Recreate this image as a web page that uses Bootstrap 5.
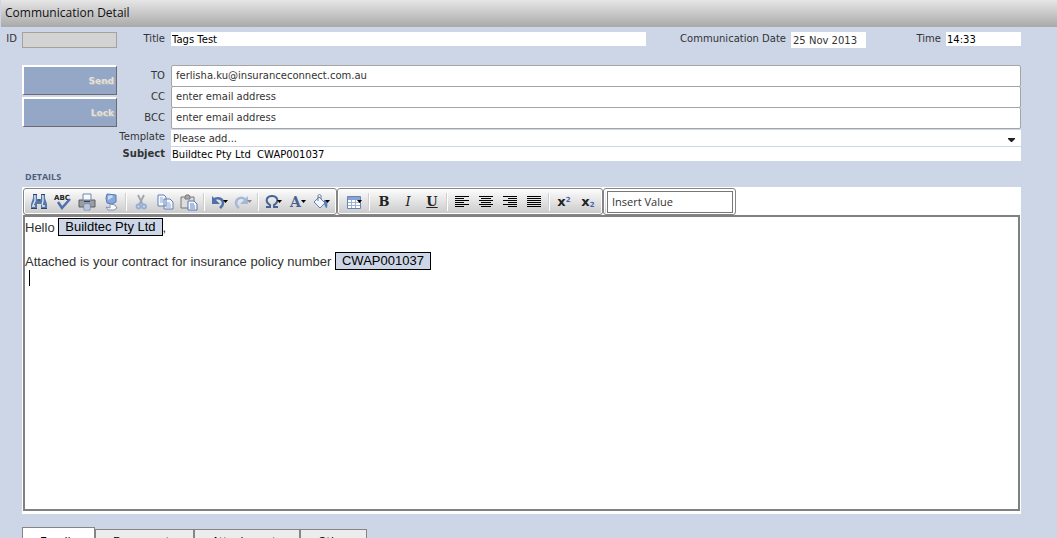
<!DOCTYPE html>
<html lang="en">
<head>
<meta charset="utf-8">
<meta name="viewport" content="width=device-width, initial-scale=1">
<title>Communication Detail</title>
<link href="https://cdn.jsdelivr.net/npm/bootstrap@5.3.0/dist/css/bootstrap.min.css" rel="stylesheet">
<style>
  body { background: #ccd6e7; color: #333; font: 11px/14px "DejaVu Sans", Verdana, sans-serif; }
  .shell { height: 100vh; padding-right: 36px; }
  .title-bar { height: 27px; margin: 0 -36px 0 1px; padding: 0 4px; background: linear-gradient(#e6e6e6, #a9a9a9); color: #111; font: 12px/26px "Open Sans", "Noto Sans", sans-serif; }
  .caption { text-align: right; white-space: nowrap; font-size: 10px; line-height: 14px; }
  .plain { border: 0; border-radius: 0; background: #fff; color: #000; padding: 1px 2px 0 1px; height: 14px; font-size: 10px; line-height: 14px; min-width: 0; outline: 0; }
  .top-row { height: 38px; padding-top: 5px; }
  .id-box { width: 95px; height: 16px; background: #d3d3d3; border: 1px solid #a5a29c; }
  .short-box { width: 75px; }
  .date-box { height: 16px; color: #333; padding: 0 2px; }
  .cap-id { width: 22px; padding-right: 5px; }
  .cap-title { width: 54px; padding-right: 6px; }
  .cap-date { width: 145px; padding-right: 5px; }
  .cap-time { width: 80px; padding-right: 5px; }
  .action { height: 30px; width: 95px; border: solid; border-width: 2px 1px 1px 2px; border-color: #fff #6c6a6a #6c6a6a #fff; background: #95a7c6; color: #e4e1db; text-shadow: 1px 1px 0 #b9b8b8; font: bold 9px/26px "DejaVu Sans", Verdana, sans-serif; text-align: right; padding: 0 2px; }
  .side { width: 95px; margin-left: 22px; gap: 2px; }
  .field-row { display: grid; grid-template-columns: 54px 1fr; }
  .field-row .caption { padding-right: 6px; }
  .address { height: 22px; margin-bottom: -1px; border: 1px solid #a5a5a5; border-radius: 2px; background: #fff; color: #333; font-size: 10px; line-height: 16px; padding: 0 4px 2px; outline: 0; min-width: 0; }
  .address::placeholder { color: #333; opacity: 1; }
  .mail-row .caption { padding-top: 4px; }
  .template-row { margin: 2px 0 1px; }
  .template { height: 16px; appearance: none; color: #333; padding: 2px 2px 0; background: #fff url("data:image/svg+xml,%3Csvg xmlns='http://www.w3.org/2000/svg' width='7' height='4'%3E%3Cpath d='M0 0h7v1L4 4H3L0 1z' fill='%23222'/%3E%3C/svg%3E") no-repeat right 6px top 8px; }
  .section-name { margin: 9px 0 4px 25px; font: bold 9px/13px "Open Sans", "Noto Sans", sans-serif; color: #4c607c; }
  .editor { margin-left: 22px; background: #fff; padding: 1px 1px 3px; }
  .tool-group { height: 27px; border: 1px solid #868686; border-radius: 3px; background: linear-gradient(#fdfdfd, #c9c9c9); box-shadow: inset 0 0 0 1px #fff; padding: 0 3px; }
  .tool-group:nth-child(n+2) { padding-right: 2px; }
  .tool-group.roomy { padding-left: 4px; }
  .tool { width: 24px; height: 24px; border: 0; padding: 0; background: none; color: #222; }
  .tool svg { display: block; margin: auto; width: 20px; height: 18px; }
  .glyph { font: bold 13px/20px "DejaVu Serif", "Liberation Serif", serif; }
  .glyph-x { font: bold 13px/20px "DejaVu Sans", Verdana, sans-serif; }
  .glyph-x sup, .glyph-x sub { font-size: 7px; line-height: 0; color: #4863a3; }
  .rule { width: 1px; height: 18px; margin: 0 2px 0 3px; background: #fff; box-shadow: -1px 0 0 #cfcfcf; }
  .insert-value { width: 126px; height: 22px; border: 1px solid #777; border-radius: 0; background: #fff; color: #333; padding: 0 4px; font: 11px/20px "Open Sans", "Noto Sans", sans-serif; box-shadow: 0 0 0 1px #fff; outline: 0; }
  .insert-value::placeholder { color: #333; opacity: 1; }
  .paper { height: 296px; border: 2px solid #808080; color: #333; font: 13px/17px "Liberation Sans", Arial, sans-serif; padding-top: 2px; outline: 0; }
  .paper p { margin: 0; min-height: 17px; white-space: pre-wrap; }
  .tag { display: inline-block; height: 18px; margin: -1px 0; border: 1px solid #000; background: #ccd6e7; color: #000; padding: 0 6px; line-height: 16px; vertical-align: 1px; }
  .caret { display: inline-block; width: 1px; height: 16px; margin-left: 4px; background: #000; }
  .tabs { margin: 13px 0 0 22px; height: 30px; }
  .tab { border: 1px solid #858585; border-bottom: 0; background: #ececec; color: #000; height: 28px; padding: 5px 17px 8px; font: 11px/14px "DejaVu Sans", Verdana, sans-serif; text-align: left; }
  .tab.current { background: #fff; height: 30px; width: 73px; padding-top: 7px; }
</style>
</head>
<body>
<div class="shell overflow-hidden">
  <header class="title-bar">Communication Detail</header>
  <main>
    <div class="top-row d-flex align-items-start">
      <label class="caption cap-id" for="f-id">ID</label>
      <input id="f-id" class="plain id-box" disabled>
      <label class="caption cap-title" for="f-title">Title</label>
      <input id="f-title" class="plain flex-grow-1" value="Tags Test">
      <label class="caption cap-date" for="f-date">Communication Date</label>
      <input id="f-date" class="plain short-box date-box" value="25 Nov 2013">
      <label class="caption cap-time" for="f-time">Time</label>
      <input id="f-time" class="plain short-box" value="14:33">
    </div>

    <div class="d-flex">
      <div class="side d-flex flex-column">
        <button type="button" class="action">Send</button>
        <button type="button" class="action">Lock</button>
      </div>
      <div class="flex-grow-1">
        <div class="field-row mail-row"><label class="caption" for="f-to">TO</label><input id="f-to" class="address" value="ferlisha.ku@insuranceconnect.com.au"></div>
        <div class="field-row mail-row"><label class="caption" for="f-cc">CC</label><input id="f-cc" class="address" placeholder="enter email address"></div>
        <div class="field-row mail-row"><label class="caption" for="f-bcc">BCC</label><input id="f-bcc" class="address" placeholder="enter email address"></div>
        <div class="field-row template-row"><label class="caption" for="f-template">Template</label><select id="f-template" class="plain template"><option>Please add...</option></select></div>
        <div class="field-row"><label class="caption fw-bold" for="f-subject">Subject</label><input id="f-subject" class="plain" value="Buildtec Pty Ltd  CWAP001037"></div>
      </div>
    </div>

    <h2 class="section-name">DETAILS</h2>

    <section class="editor">
      <div class="d-flex" role="toolbar" aria-label="Formatting">
        <div class="tool-group d-flex align-items-center">
          <button type="button" class="tool" aria-label="Find"><svg viewBox="0 0 20 18"><path d="M4 2h4v4h4V2h4v3l2 6v4h-6v-4H8v4H2v-4l2-6z" fill="#5877a6"/><path d="M5 3h1v5L4 12M13 3h1v5l-1 4M3 13h3M13 13h3" stroke="#e3ecf8" stroke-width="1.3" fill="none"/><path d="M4 1.500h4M12 1.500h4M2 15.500h6M12 15.500h6M9 7h2" stroke="#2f466c"/></svg></button>
          <button type="button" class="tool" aria-label="Check spelling"><svg viewBox="0 0 20 18"><text x="1" y="7" font-family="DejaVu Sans" font-size="7" font-weight="bold" fill="#222">ABC</text><path d="M5 9l4 6 8-9" fill="none" stroke="#4d70ae" stroke-width="2.500"/></svg></button>
          <button type="button" class="tool" aria-label="Print"><svg viewBox="0 0 20 18"><path d="M2 7h16v7H2z" fill="#9a9da3" stroke="#5b5e65"/><path d="M6 1h8v6H6zM7 11h6v6H7z" fill="#f5f9ff" stroke="#7087ad"/><path d="M7 8h6v1H7z" fill="#444"/><path d="M8 13h4M8 15h4" stroke="#7795c5"/></svg></button>
          <button type="button" class="tool" aria-label="Edit source"><svg viewBox="0 0 20 18"><path d="M6 1l9 1v7l-4 2-5-1-1-5z" fill="#86a8dc" stroke="#597bb0"/><path d="M7 3l4-1 1 2-5 3z" fill="#c9dbf4"/><path d="M9 11l5 1 2 3-3 2H7l-2-3 4 1z" fill="#f8faff" stroke="#8393b0"/></svg></button>
          <span class="rule"></span>
          <button type="button" class="tool" aria-label="Cut"><svg viewBox="0 0 20 18"><path d="M7 2l5 10M13 2L8 12" stroke="#a1a5ac" stroke-width="1.800"/><circle cx="7.500" cy="13.500" r="2" fill="none" stroke="#93aeda" stroke-width="1.800"/><circle cx="13" cy="13.500" r="2" fill="none" stroke="#93aeda" stroke-width="1.800"/></svg></button>
          <button type="button" class="tool" aria-label="Copy"><svg viewBox="0 0 20 18"><path d="M3 2h6l2 2v9H3zM9 6h6l3 3v7H9z" fill="#f4f8ff" stroke="#6280b1"/><path d="M5 5h3M5 7h4M5 9h3M11 10h4M11 12h5M11 14h5" stroke="#8faad6"/></svg></button>
          <button type="button" class="tool" aria-label="Paste"><svg viewBox="0 0 20 18"><path d="M2 4h13v11H2z" fill="#ddd" stroke="#777"/><path d="M6 4l1-2h3l1 2v2H6z" fill="#aaa" stroke="#777"/><path d="M9 8h6l3 3v6H9z" fill="#f4f8ff" stroke="#5977ab"/><path d="M11 11h4M11 13h5M11 15h5" stroke="#6384bd"/></svg></button>
          <span class="rule"></span>
          <button type="button" class="tool" aria-label="Undo"><svg viewBox="0 0 20 18"><path d="M4 7c4-3 10-2 10 3 0 3-2 4-3 5" fill="none" stroke="#5070aa" stroke-width="2.500"/><path d="M3 3v8h8z" fill="#5070aa"/><path d="M14 7h5l-2.500 3z"/></svg></button>
          <button type="button" class="tool" aria-label="Redo"><svg viewBox="0 0 20 18"><path d="M13 7C9 3 3 5 3 10c0 3 2 4 3 5" fill="none" stroke="#a4b9d9" stroke-width="2.500"/><path d="M15 3v8H7z" fill="#a4b9d9"/><path d="M14 7h5l-2.500 3z" fill="#888"/></svg></button>
          <span class="rule"></span>
          <button type="button" class="tool" aria-label="Insert symbol"><svg viewBox="0 0 20 18"><path d="M3 14h4v-2C1 8 4 3 9 3s8 5 2 9v2h4" fill="none" stroke="#476393" stroke-width="2"/><path d="M14 7h5l-2.500 3z"/></svg></button>
          <button type="button" class="tool" aria-label="Text colour"><svg viewBox="0 0 20 18"><text x="3" y="14" font-family="DejaVu Serif" font-size="14" font-weight="bold" fill="#4b6290">A</text><path d="M14 7h5l-2.500 3z"/></svg></button>
          <button type="button" class="tool" aria-label="Fill colour"><svg viewBox="0 0 20 18"><path d="M8 4l6 6-5 5-6-6z" fill="#f1f6fe" stroke="#647fab"/><path d="M7 8V3c0-2 3-2 3 0v3" fill="none" stroke="#6b7c98"/><path d="M13 7c3 0 4 3 3 8-2 0-2-3-3-4z" fill="#587dbb"/><path d="M14 7h5l-2.500 3z"/></svg></button>
        </div>
        <div class="tool-group roomy d-flex align-items-center">
          <button type="button" class="tool" aria-label="Insert table"><svg viewBox="0 0 20 18"><path d="M3.500 3.500h13v12h-13z" fill="#fff" stroke="#6582b3"/><path d="M4 4h12v3H4z" fill="#87a3d2"/><path d="M4 9.500h12M4 12.500h12M7.500 7v8M11.500 7v8" stroke="#9cb2d7"/><path d="M13 7h5l-2.500 3z"/></svg></button>
          <span class="rule"></span>
          <button type="button" class="tool glyph" aria-label="Bold">B</button>
          <button type="button" class="tool glyph fst-italic fw-normal" aria-label="Italic">I</button>
          <button type="button" class="tool glyph text-decoration-underline" aria-label="Underline">U</button>
          <span class="rule"></span>
          <button type="button" class="tool" aria-label="Align left"><svg viewBox="0 0 20 18"><path d="M3 3.500h14M3 5.500h9M3 7.500h14M3 9.500h9M3 11.500h14M3 13.500h9" stroke="#000"/></svg></button>
          <button type="button" class="tool" aria-label="Centre"><svg viewBox="0 0 20 18"><path d="M3 3.500h14M5 5.500h10M3 7.500h14M5 9.500h10M3 11.500h14M5 13.500h10" stroke="#000"/></svg></button>
          <button type="button" class="tool" aria-label="Align right"><svg viewBox="0 0 20 18"><path d="M3 3.500h14M8 5.500h9M3 7.500h14M8 9.500h9M3 11.500h14M8 13.500h9" stroke="#000"/></svg></button>
          <button type="button" class="tool" aria-label="Justify"><svg viewBox="0 0 20 18"><path d="M3 3.500h14M3 5.500h14M3 7.500h14M3 9.500h14M3 11.500h14M3 13.500h14" stroke="#000"/></svg></button>
          <span class="rule"></span>
          <button type="button" class="tool glyph-x" aria-label="Superscript">x<sup>2</sup></button>
          <button type="button" class="tool glyph-x" aria-label="Subscript">x<sub>2</sub></button>
        </div>
        <div class="tool-group d-flex align-items-center">
          <input class="insert-value" aria-label="Insert Value" placeholder="Insert Value">
        </div>
      </div>
      <div class="paper" role="textbox" aria-label="Message" tabindex="0"><p>Hello <span class="tag">Buildtec Pty Ltd</span>,</p><p></p><p>Attached is your contract for insurance policy number <span class="tag">CWAP001037</span></p><p><span class="caret"></span></p></div>
    </section>

    <nav class="tabs d-flex align-items-end" aria-label="Sections">
      <button type="button" class="tab current">Emails</button>
      <button type="button" class="tab">Documents</button>
      <button type="button" class="tab">Attachments</button>
      <button type="button" class="tab">Other</button>
    </nav>
  </main>
</div>
<script src="https://cdn.jsdelivr.net/npm/bootstrap@5.3.0/dist/js/bootstrap.bundle.min.js"></script>
</body>
</html>
